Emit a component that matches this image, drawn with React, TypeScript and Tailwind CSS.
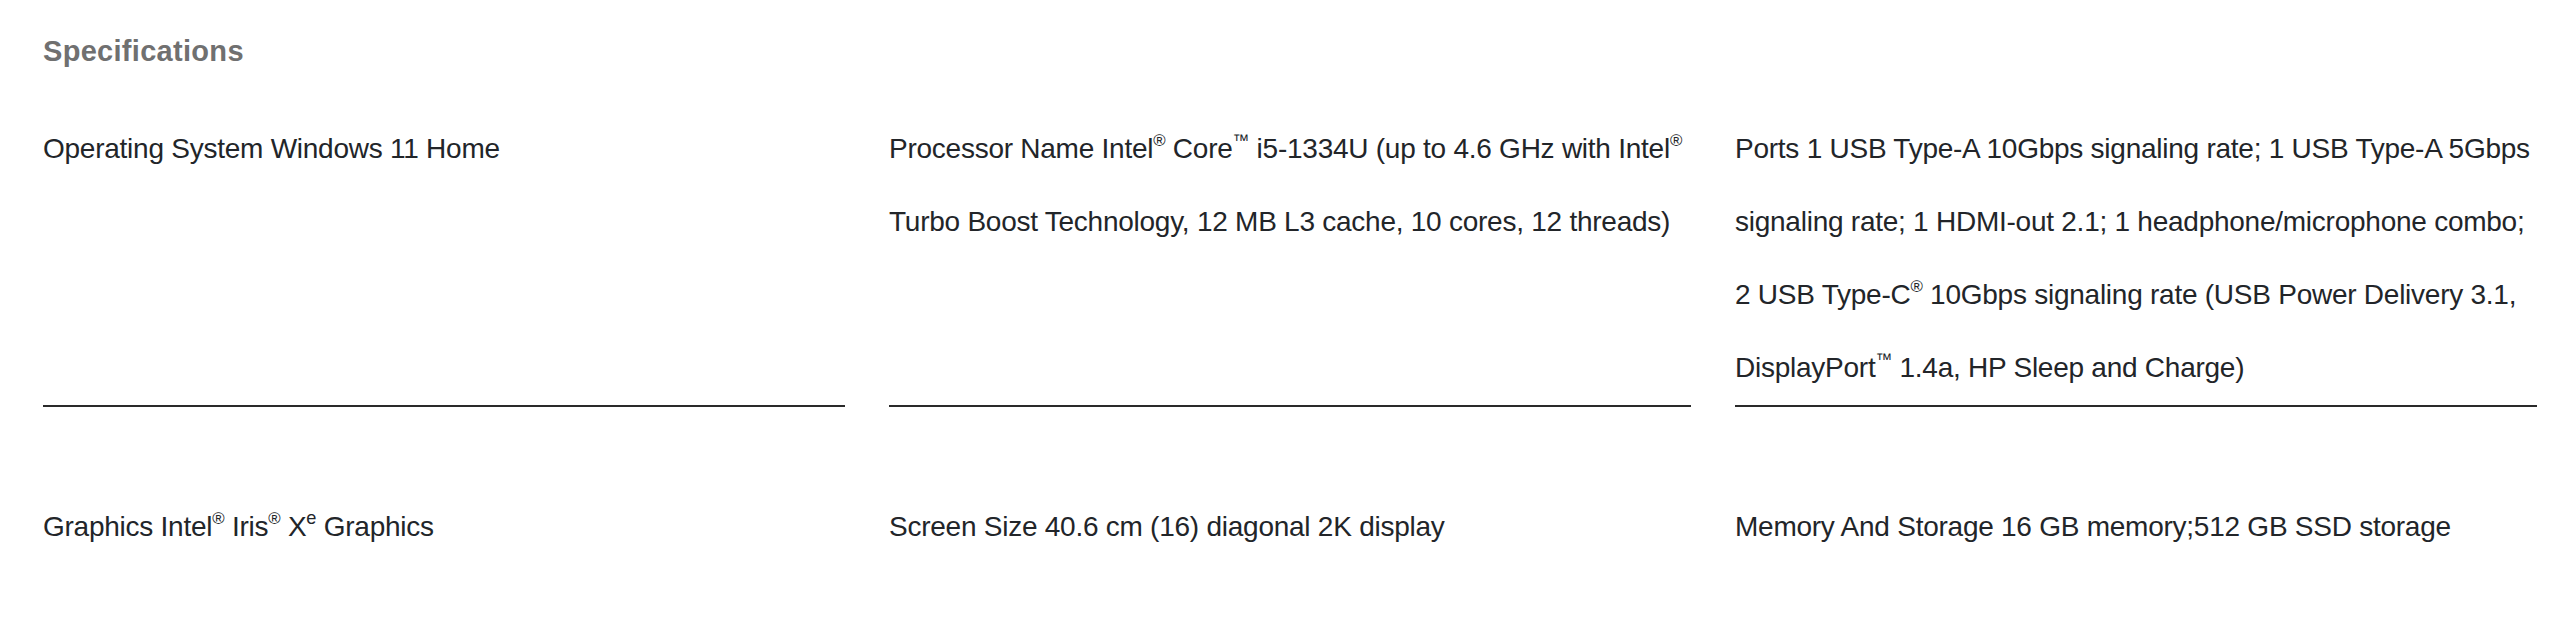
import React from "react";

const R = () => <sup className="text-[0.6em] top-[-0.7em]">®</sup>;
const TM = () => <sup className="text-[0.6em] top-[-0.7em]">™</sup>;

type Cell = { lines: React.ReactNode[]; divider: boolean };

export default function App() {
  const cells: Cell[] = [
    { lines: [<>Operating System Windows 11 Home</>], divider: true },
    {
      lines: [
        <>
          Processor Name Intel<R /> Core<TM /> i5-1334U (up to 4.6 GHz with Intel<R />
        </>,
        <>Turbo Boost Technology, 12 MB L3 cache, 10 cores, 12 threads)</>,
      ],
      divider: true,
    },
    {
      lines: [
        <>Ports 1 USB Type-A 10Gbps signaling rate; 1 USB Type-A 5Gbps</>,
        <>signaling rate; 1 HDMI-out 2.1; 1 headphone/microphone combo;</>,
        <>
          2 USB Type-C<R /> 10Gbps signaling rate (USB Power Delivery 3.1,
        </>,
        <>
          DisplayPort<TM /> 1.4a, HP Sleep and Charge)
        </>,
      ],
      divider: true,
    },
    {
      lines: [
        <>
          Graphics Intel<R /> Iris<R /> X<sup className="text-[0.65em] top-[-0.65em]">e</sup> Graphics
        </>,
      ],
      divider: false,
    },
    { lines: [<>Screen Size 40.6 cm (16) diagonal 2K display</>], divider: false },
    { lines: [<>Memory And Storage 16 GB memory;512 GB SSD storage</>], divider: false },
  ];

  return (
    <div
      className="min-h-[632px] w-full bg-white pl-[43px] pr-[23px]"
      style={{ fontFamily: '"Liberation Sans", Arial, sans-serif' }}
    >
      <h2 className="pt-[33px] text-[29px] font-bold leading-[36px] tracking-[0.3px] text-[#707070]">
        Specifications
      </h2>
      <div className="mt-[43px] grid grid-cols-3 gap-x-[44px] gap-y-[83px]">
        {cells.map((c, i) => (
          <div
            key={i}
            className={
              c.divider
                ? "border-b-2 border-[#2a2a2a] pb-[1px] text-[28px] leading-[73px] tracking-[-0.25px] text-[#222529]"
                : "text-[28px] leading-[73px] tracking-[-0.25px] text-[#222529]"
            }
          >
            {c.lines.map((l, j) => (
              <div key={j} className="whitespace-nowrap">
                {l}
              </div>
            ))}
          </div>
        ))}
      </div>
    </div>
  );
}
